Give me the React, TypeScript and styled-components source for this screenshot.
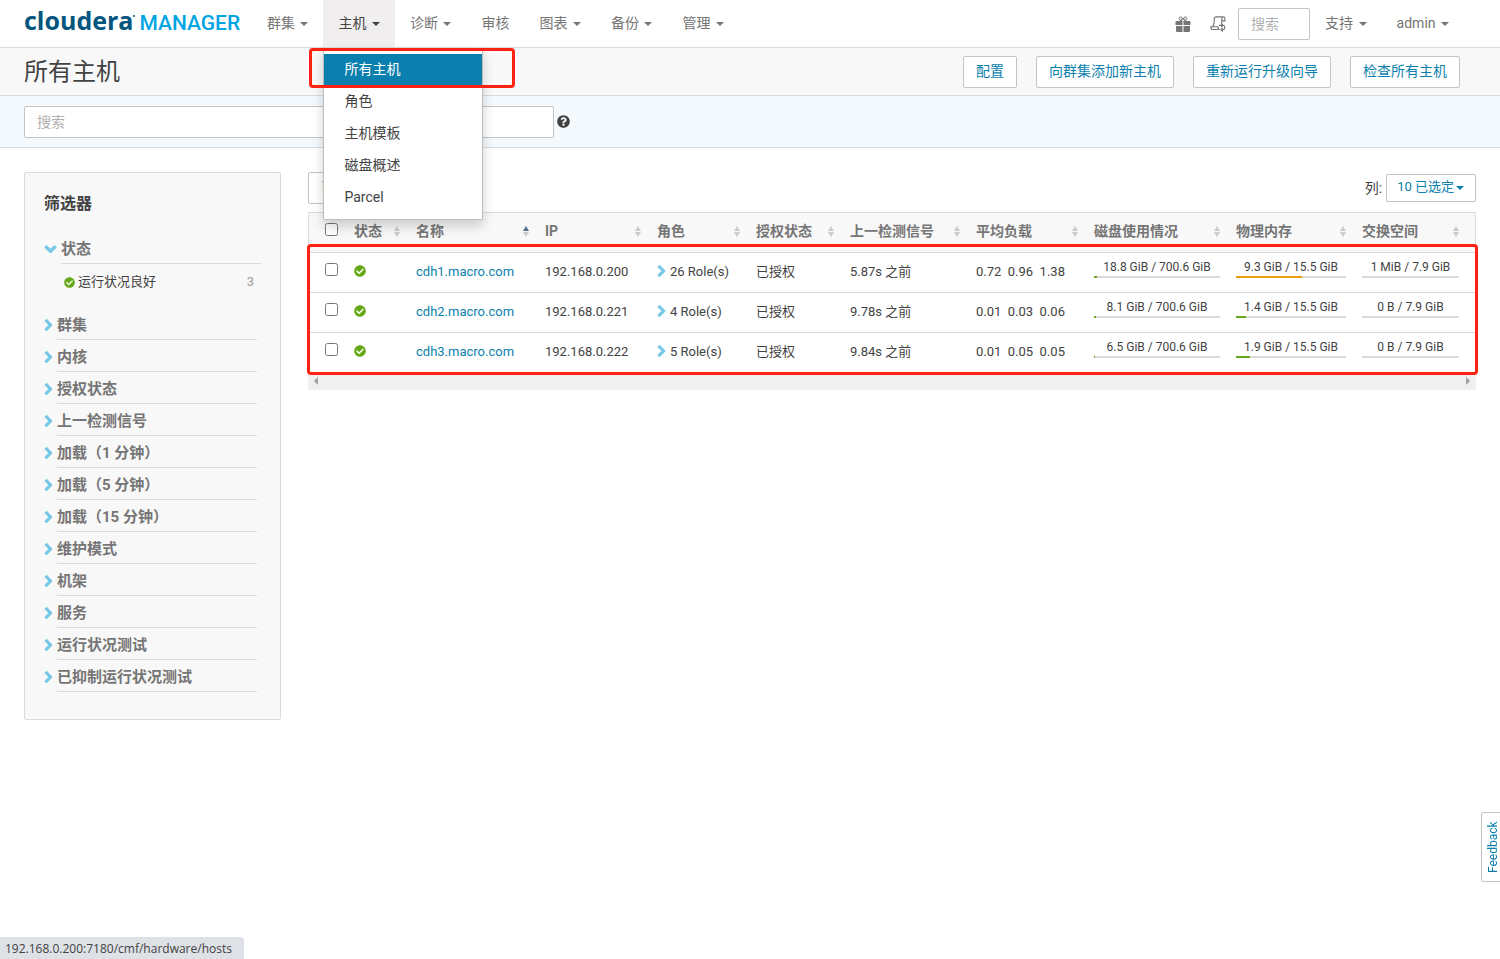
import React from "react";
import styled, { createGlobalStyle, css } from "styled-components";
import { FaCheckCircle, FaQuestionCircle } from "react-icons/fa";

const colors = {
  text: "#424242",
  muted: "#757575",
  link: "#0b7fad",
  line: "#dbdbdb",
  control: "#c4c4c4",
  panel: "#f8f8f8",
  good: "#67a819",
  warn: "#e89f0c",
  chevron: "#78c8ea",
  mark: "#ff2111",
};

const GlobalStyle = createGlobalStyle`
  *, *::before, *::after { box-sizing: border-box; }
  body {
    margin: 0;
    background: #fff;
    color: ${colors.text};
    font: 14px/20px Roboto, "Noto Sans CJK SC", sans-serif;
  }
  button, input { font: inherit; color: inherit; }
  a { color: inherit; text-decoration: none; }
  h1, h2, ul { margin: 0; padding: 0; }
  ul { list-style: none; }
`;

/* ---------- shared parts ---------- */

const Caret = styled.span`
  display: inline-block;
  margin-left: 2px;
  vertical-align: middle;
  border-top: 4px solid currentColor;
  border-left: 4px solid transparent;
  border-right: 4px solid transparent;
`;

const Button = styled.button<{ $compact?: boolean }>`
  height: ${(p) => (p.$compact ? 28 : 32)}px;
  padding: ${(p) => (p.$compact ? "0 11px 2px 10px" : "0 12px 2px")};
  border: 1px solid ${colors.control};
  border-radius: 2px;
  background: #fff;
  color: ${colors.link};
  font-size: ${(p) => (p.$compact ? 13 : 14)}px;
  white-space: nowrap;
`;

const TextInput = styled.input`
  height: 32px;
  padding: 0 12px;
  border: 1px solid ${colors.control};
  border-radius: 2px;
  background: #fff;
  &::placeholder { color: #b0b0b0; opacity: 1; }
`;

const Checkbox = styled.input.attrs({ type: "checkbox" })`
  display: block;
  width: 13px;
  height: 13px;
  margin: 0;
`;

const Annotation = styled.div<{ $area: "menu" | "rows" }>`
  position: absolute;
  border: 3px solid ${colors.mark};
  border-radius: 4px;
  pointer-events: none;
  ${(p) =>
    p.$area === "menu"
      ? css`top: 0; left: -15px; width: 206px; height: 40px;`
      : css`top: 32px; left: -1px; right: -2px; height: 131px;`}
`;

const ChevronIcon = ({ down = false }: { down?: boolean }) =>
  down ? (
    <svg width="13" height="12" viewBox="0 0 13 12" aria-hidden="true">
      <path d="M1.300 3.200 6.500 8 11.700 3.200" fill="none" stroke={colors.chevron} strokeWidth="3.500" />
    </svg>
  ) : (
    <svg width="9" height="14" viewBox="0 0 9 14" aria-hidden="true">
      <path d="M1.500 1.800 6.500 7 1.500 12.200" fill="none" stroke={colors.chevron} strokeWidth="3.200" />
    </svg>
  );

const GoodIcon = styled(FaCheckCircle)`
  display: block;
  flex: none;
  color: ${colors.good};
`;

/* ---------- top navigation ---------- */

const TopBar = styled.header`
  display: flex;
  height: 48px;
  padding: 0 36px 0 24px;
  border-bottom: 1px solid ${colors.line};
`;

const Brand = styled.a`
  display: flex;
  align-items: baseline;
  width: 228px;
  line-height: 41px;
  white-space: nowrap;
`;

const BrandName = styled.span`
  color: #05567f;
  font: 700 25px/41px "Open Sans", sans-serif;
`;

const BrandDot = styled.i`
  align-self: flex-start;
  width: 2px;
  height: 2px;
  margin: 15px 4px 0 0;
  border-radius: 1px;
  background: #05567f;
`;

const BrandProduct = styled.span`
  color: #00a5e3;
  font-size: 21px;
  font-weight: 500;
`;

const NavList = styled.ul`
  display: flex;
`;

const NavItem = styled.li`
  position: relative;
`;

const NavLink = styled.a<{ $open?: boolean }>`
  display: block;
  height: 47px;
  padding: 0 15px;
  color: ${(p) => (p.$open ? colors.text : colors.muted)};
  background: ${(p) => (p.$open ? "#f0eeef" : "transparent")};
  line-height: 46px;
  white-space: nowrap;
`;

const Menu = styled.ul`
  position: absolute;
  z-index: 10;
  top: 48px;
  left: 0;
  width: 160px;
  padding: 6px 0 5px;
  border: 1px solid #bdbdbd;
  border-top: 0;
  border-radius: 0 0 2px 2px;
  background: #fff;
  box-shadow: 0 6px 12px rgba(0, 0, 0, 0.18);
`;

const MenuLink = styled.a<{ $active?: boolean }>`
  display: block;
  height: 32px;
  padding: 0 20px;
  color: ${(p) => (p.$active ? "#fff" : colors.text)};
  background: ${(p) => (p.$active ? colors.link : "transparent")};
  line-height: 30px;
`;

const Tools = styled.div`
  display: flex;
  align-items: center;
  margin-left: auto;
`;

const IconButton = styled.button`
  display: flex;
  width: 35px;
  height: 47px;
  padding: 0;
  align-items: center;
  justify-content: center;
  border: 0;
  background: none;
  color: ${colors.muted};
`;

const ToolSearch = styled(TextInput)`
  width: 72px;
  margin-left: 3px;
`;

const GiftIcon = () => (
  <svg width="16" height="16" viewBox="0 0 16 16" fill="currentColor" aria-hidden="true">
    <path d="M1.500 5h6v4H.5V6q0-1 1-1zM8.500 5h6q1 0 1 1v3h-7zM1 10h6.500v6H2q-1 0-1-1zM8.500 10H15v5q0 1-1 1H8.500z" />
    <path d="M7.500 5Q4 4.500 4 2.500 4.200.8 5.700.8 7.500 1 8 4 8.500 1 10.300.8q1.500 0 1.700 1.700 0 2-3.500 2.500M6.200 2.200v2.800M9.800 2.200v2.800" fill="none" stroke="currentColor" strokeWidth="0.900" />
  </svg>
);

const ScrollIcon = () => (
  <svg width="16" height="16" viewBox="0 0 16 16" fill="none" stroke="currentColor" strokeWidth="1.150" aria-hidden="true">
    <path d="M9 13.500H3Q.8 13.500.8 10.700h7.200q0 2.800 1.700 2.800M2.900 10.500Q4.500 8 4.300 4 4.200.8 6 .8h7.500M13.500.8Q11.800 1 11.800 3.500v4M11.900 4.800h3V3Q15 .8 13.300.8" />
    <path d="M9 9.300h4q1.800.2 1.800 2.200t-1.800 2.300h-1.800M11.200 7.500 13 9.300 11.200 11M12.800 12 11 13.800l1.800 1.700" />
  </svg>
);

/* ---------- page heading and search ---------- */

const TitleBar = styled.div`
  display: flex;
  align-items: center;
  justify-content: space-between;
  height: 48px;
  padding: 0 40px 0 24px;
  border-bottom: 1px solid ${colors.line};
  background: ${colors.panel};
`;

const Title = styled.h1`
  font-size: 24px;
  font-weight: 400;
  line-height: 32px;
`;

const Actions = styled.div`
  display: flex;
  gap: 19px;
`;

const SearchBar = styled.form`
  display: flex;
  align-items: center;
  gap: 3px;
  height: 52px;
  padding: 0 24px;
  border-bottom: 1px solid ${colors.line};
  background: #f3f9fd;
`;

const HostSearch = styled(TextInput)`
  width: 530px;
`;

/* ---------- filters ---------- */

const Content = styled.div`
  display: flex;
  align-items: flex-start;
  gap: 27px;
  padding: 24px;
`;

const Filters = styled.aside`
  flex: none;
  width: 257px;
  padding: 20px 19px 26px;
  border: 1px solid ${colors.line};
  border-radius: 2px;
  background: ${colors.panel};
`;

const FiltersTitle = styled.h2`
  margin-bottom: 18px;
  font-size: 16px;
  font-weight: 700;
  line-height: 22px;
`;

const FilterHead = styled.button`
  display: flex;
  align-items: center;
  gap: 4px;
  width: 100%;
  height: 30px;
  padding: 2px 0 0;
  border: 0;
  background: none;
  color: ${colors.muted};
  font-size: 15px;
  font-weight: 700;
  text-align: left;
`;

const FilterRule = styled.div<{ $open?: boolean }>`
  width: 200px;
  margin: 0 0 1px ${(p) => (p.$open ? 17 : 13)}px;
  border-top: 1px solid ${colors.line};
`;

const FilterValue = styled.a`
  display: flex;
  align-items: center;
  gap: 3px;
  margin: 7px 7px 16px 20px;
  font-size: 13px;
  line-height: 22px;
`;

const FilterCount = styled.span`
  margin-left: auto;
  color: #9e9e9e;
`;

/* ---------- host table ---------- */

const Main = styled.main`
  flex: 1;
  min-width: 0;
`;

const TableTools = styled.div`
  display: flex;
  align-items: center;
  justify-content: space-between;
  height: 32px;
  margin-bottom: 8px;
`;

const ColumnPicker = styled.div`
  display: flex;
  align-items: center;
  gap: 4px;
`;

const TableBox = styled.div`
  position: relative;
`;

const Table = styled.table`
  width: 100%;
  table-layout: fixed;
  border: 1px solid ${colors.line};
  border-bottom: 0;
  border-spacing: 0;
  font-size: 13px;
`;

const Th = styled.th`
  height: 39px;
  padding: 0 8px 4px;
  background: ${colors.panel};
  color: ${colors.muted};
  font-size: 14px;
  font-weight: 700;
  text-align: left;
  white-space: nowrap;
  &:first-child { padding: 0 0 6px 16px; }
  &:last-child { padding-right: 16px; }
`;

const Td = styled.td<{ $icon?: boolean }>`
  height: 40px;
  padding: 0 8px ${(p) => (p.$icon ? 4 : 2)}px;
  border-top: 1px solid ${colors.line};
  white-space: pre;
  &:first-child { padding: 0 0 6px 16px; }
  &:last-child { padding-right: 16px; }
`;

const SortHead = styled.div`
  display: flex;
  align-items: center;
  justify-content: space-between;
`;

const SortMarks = styled.span<{ $asc?: boolean }>`
  display: flex;
  flex-direction: column;
  gap: 1px;
  padding-top: 2px;
  &::before, &::after {
    content: "";
    border: 3px solid transparent;
  }
  &::before {
    border-top: 0;
    border-bottom: 5px solid ${(p) => (p.$asc ? "#54708c" : "#c9cccf")};
  }
  &::after {
    border-bottom: 0;
    border-top: 5px solid #c9cccf;
  }
`;

const HostLink = styled.a`
  color: ${colors.link};
`;

const Roles = styled.a`
  display: flex;
  align-items: center;
  gap: 4px;
  svg { margin-bottom: 2px; }
`;

const Usage = styled.div`
  padding-bottom: 8px;
  font-size: 12px;
  line-height: 18px;
  text-align: center;
`;

const Track = styled.div`
  height: 2px;
  background: ${colors.line};
`;

const Fill = styled.div<{ $warn?: boolean }>`
  height: 2px;
  background: ${(p) => (p.$warn ? colors.warn : colors.good)};
`;

const ScrollTrack = styled.div`
  display: flex;
  justify-content: space-between;
  height: 18px;
  padding: 5px 6px;
  background: #f0f0f0;
`;

const ScrollArrow = styled.button<{ $right?: boolean }>`
  width: 4px;
  height: 8px;
  padding: 0;
  border: 0 solid transparent;
  border-width: 4px 0;
  background: none;
  ${(p) => (p.$right ? "border-left: 4px solid #a0a0a0;" : "border-right: 4px solid #a0a0a0;")}
`;

/* ---------- floating parts ---------- */

const Feedback = styled.button`
  position: fixed;
  right: -1px;
  bottom: 77px;
  width: 20px;
  height: 70px;
  padding: 0 4px 0 0;
  border: 1px solid ${colors.control};
  border-radius: 0 2px 2px 0;
  background: #fff;
  color: ${colors.link};
  font-size: 12px;
  line-height: 14px;
  writing-mode: vertical-rl;
  transform: rotate(180deg);
`;

const StatusUrl = styled.div`
  position: fixed;
  left: 0;
  bottom: 0;
  height: 22px;
  padding: 0 12px 0 5px;
  border-radius: 0 4px 0 0;
  background: #dee1e6;
  font: 12px/24px "Open Sans", sans-serif;
`;

/* ---------- data ---------- */

const navItems = [
  { label: "群集", menu: true },
  { label: "主机", menu: true, open: true },
  { label: "诊断", menu: true },
  { label: "审核" },
  { label: "图表", menu: true },
  { label: "备份", menu: true },
  { label: "管理", menu: true },
];

const hostMenu = ["所有主机", "角色", "主机模板", "磁盘概述", "Parcel"];
const actions = ["配置", "向群集添加新主机", "重新运行升级向导", "检查所有主机"];

const filters = [
  "群集", "内核", "授权状态", "上一检测信号", "加载（1 分钟）", "加载（5 分钟）",
  "加载（15 分钟）", "维护模式", "机架", "服务", "运行状况测试", "已抑制运行状况测试",
];

const columns = [
  { label: "状态", width: 62 },
  { label: "名称", width: 129, asc: true },
  { label: "IP", width: 112 },
  { label: "角色", width: 99 },
  { label: "授权状态", width: 94 },
  { label: "上一检测信号", width: 126 },
  { label: "平均负载", width: 118 },
  { label: "磁盘使用情况", width: 142 },
  { label: "物理内存", width: 126 },
  { label: "交换空间", width: 121 },
];

type Amount = { text: string; percent: number; warn?: boolean };

const hosts: {
  name: string; ip: string; roles: number; beat: string; load: string; usage: Amount[];
}[] = [
  {
    name: "cdh1.macro.com", ip: "192.168.0.200", roles: 26, beat: "5.87s 之前", load: "0.72  0.96  1.38",
    usage: [
      { text: "18.8 GiB / 700.6 GiB", percent: 2.7 },
      { text: "9.3 GiB / 15.5 GiB", percent: 60, warn: true },
      { text: "1 MiB / 7.9 GiB", percent: 0 },
    ],
  },
  {
    name: "cdh2.macro.com", ip: "192.168.0.221", roles: 4, beat: "9.78s 之前", load: "0.01  0.03  0.06",
    usage: [
      { text: "8.1 GiB / 700.6 GiB", percent: 1.2 },
      { text: "1.4 GiB / 15.5 GiB", percent: 9 },
      { text: "0 B / 7.9 GiB", percent: 0 },
    ],
  },
  {
    name: "cdh3.macro.com", ip: "192.168.0.222", roles: 5, beat: "9.84s 之前", load: "0.01  0.05  0.05",
    usage: [
      { text: "6.5 GiB / 700.6 GiB", percent: 0.9 },
      { text: "1.9 GiB / 15.5 GiB", percent: 12.3 },
      { text: "0 B / 7.9 GiB", percent: 0 },
    ],
  },
];

export default function App() {
  return (
    <>
      <GlobalStyle />
      <TopBar>
        <Brand href="#">
          <BrandName>cloudera</BrandName>
          <BrandDot />
          <BrandProduct>MANAGER</BrandProduct>
        </Brand>
        <nav>
          <NavList>
            {navItems.map((item) => (
              <NavItem key={item.label}>
                <NavLink href="#" $open={item.open}>
                  {item.label} {item.menu && <Caret />}
                </NavLink>
                {item.open && (
                  <Menu>
                    {hostMenu.map((entry, i) => (
                      <li key={entry}>
                        <MenuLink href="#" $active={i === 0}>{entry}</MenuLink>
                      </li>
                    ))}
                    <Annotation as="li" $area="menu" />
                  </Menu>
                )}
              </NavItem>
            ))}
          </NavList>
        </nav>
        <Tools>
          <IconButton aria-label="礼物"><GiftIcon /></IconButton>
          <IconButton aria-label="命令"><ScrollIcon /></IconButton>
          <ToolSearch type="text" placeholder="搜索" aria-label="搜索" />
          <NavLink href="#">支持 <Caret /></NavLink>
          <NavLink href="#">admin <Caret /></NavLink>
        </Tools>
      </TopBar>

      <TitleBar>
        <Title>所有主机</Title>
        <Actions>
          {actions.map((label) => <Button key={label}>{label}</Button>)}
        </Actions>
      </TitleBar>

      <SearchBar>
        <HostSearch type="text" placeholder="搜索" aria-label="搜索主机" />
        <FaQuestionCircle size={13} />
      </SearchBar>

      <Content>
        <Filters>
          <FiltersTitle>筛选器</FiltersTitle>
          <FilterHead><ChevronIcon down />状态</FilterHead>
          <FilterRule $open />
          <FilterValue href="#">
            <GoodIcon size={11} />运行状况良好<FilterCount>3</FilterCount>
          </FilterValue>
          {filters.map((label) => (
            <React.Fragment key={label}>
              <FilterHead><ChevronIcon />{label}</FilterHead>
              <FilterRule />
            </React.Fragment>
          ))}
        </Filters>

        <Main>
          <TableTools>
            <Button>已选定的操作 <Caret /></Button>
            <ColumnPicker>
              <label htmlFor="column-picker">列:</label>
              <Button id="column-picker" $compact>10 已选定<Caret /></Button>
            </ColumnPicker>
          </TableTools>
          <TableBox>
            <Table>
              <colgroup>
                <col width={37} />
                {columns.map((c) => <col key={c.label} width={c.width} />)}
              </colgroup>
              <thead>
                <tr>
                  <Th><Checkbox aria-label="选择全部" /></Th>
                  {columns.map((c) => (
                    <Th key={c.label}>
                      <SortHead>{c.label}<SortMarks $asc={c.asc} /></SortHead>
                    </Th>
                  ))}
                </tr>
              </thead>
              <tbody>
                {hosts.map((h) => (
                  <tr key={h.name}>
                    <Td><Checkbox aria-label={h.name} /></Td>
                    <Td $icon><GoodIcon size={12} /></Td>
                    <Td><HostLink href="#">{h.name}</HostLink></Td>
                    <Td>{h.ip}</Td>
                    <Td><Roles href="#"><ChevronIcon />{h.roles} Role(s)</Roles></Td>
                    <Td>已授权</Td>
                    <Td>{h.beat}</Td>
                    <Td>{h.load}</Td>
                    {h.usage.map((u, i) => (
                      <Td key={i}>
                        <Usage>
                          {u.text}
                          <Track><Fill $warn={u.warn} style={{ width: `${u.percent}%` }} /></Track>
                        </Usage>
                      </Td>
                    ))}
                  </tr>
                ))}
              </tbody>
            </Table>
            <ScrollTrack>
              <ScrollArrow aria-label="向左滚动" />
              <ScrollArrow $right aria-label="向右滚动" />
            </ScrollTrack>
            <Annotation $area="rows" />
          </TableBox>
        </Main>
      </Content>

      <Feedback>Feedback</Feedback>
      <StatusUrl>192.168.0.200:7180/cmf/hardware/hosts</StatusUrl>
    </>
  );
}
